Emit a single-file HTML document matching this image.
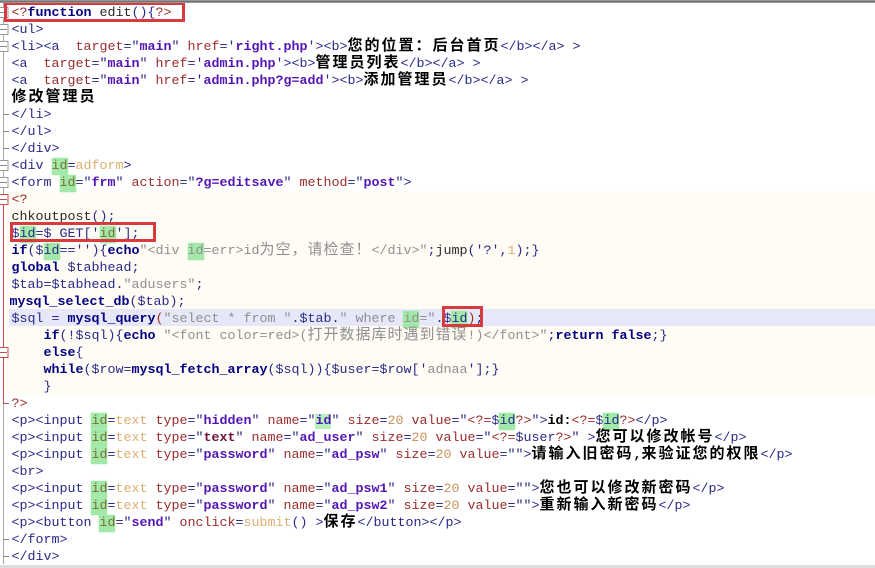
<!DOCTYPE html>
<html><head><meta charset="utf-8">
<style>
html,body{margin:0;padding:0;background:#fff}
#w{position:relative;width:875px;height:568px;overflow:hidden;background:#fff}
#php{position:absolute;left:3px;top:191px;width:872px;height:204px;background:#fffcf5}
#cur{position:absolute;left:9px;top:309px;width:866px;height:17px;background:#e6e8f9}
#code{position:absolute;left:11.5px;top:5px;right:0;font:13.334px/17px "Liberation Mono",monospace;color:#2a2a88;filter:blur(.3px)}
.l{height:17px;white-space:pre}
.a{color:#9a2c2c}
.s{color:#5316b5;font-weight:bold}
.q{color:#2a2a88}
.v{color:#dcae70}
.i{padding:1px 0;background:#a2e9a9;box-shadow:0 0 2px #b4f0ba;color:#7a7030}
.n{color:#2a2a88}
.k{color:#000080;font-weight:bold}
.g{color:#8f8f8f}
.d{color:#2a2a2a}
.c{font:bold 15px/0 "Noto Sans CJK SC","WenQuanYi Zen Hei",sans-serif;letter-spacing:2px;color:#000}
.h{font:15px/0 "Noto Sans CJK SC","WenQuanYi Zen Hei",sans-serif;letter-spacing:1px;color:#8f8f8f}
.r{position:absolute;border:3px solid #d93a3d;box-sizing:border-box}
#top{position:absolute;left:0;top:0;width:875px;height:3px;background:linear-gradient(#aaa,#666 60%,#bbb)}
#bot{position:absolute;left:0;top:565px;width:875px;height:3px;background:#ddd}
svg{position:absolute;left:0;top:0}
</style></head>
<body><div id="w">
<div id="php"></div><div id="cur"></div>
<svg width="20" height="568" fill="none" stroke-width="1">
<path d="M3.5 3V199" stroke="#aaa"/><path d="M3.5 199V403" stroke="#c05050"/><path d="M3.5 403V564" stroke="#aaa"/>
<g stroke="#999" fill="#fff">
<rect x="-2" y="7.5" width="10" height="10"/><rect x="-2" y="24.5" width="10" height="10"/><rect x="-2" y="41.5" width="10" height="10"/>
<rect x="-2" y="160.5" width="10" height="10"/><rect x="-2" y="177.5" width="10" height="10"/>
</g>
<g stroke="#c05050" fill="#fff"><rect x="-2" y="194.5" width="10" height="10"/><rect x="-2" y="347.5" width="10" height="10"/></g>
<path d="M-2 12.5H7M-2 29.5H7M-2 46.5H7M-2 165.5H7M-2 182.5H7M3 114.5H9M3 131.5H9M3 148.5H9M3 539.5H9M3 556.5H9" stroke="#888"/>
<path d="M-2 199.5H7M-2 352.5H7M3 403.5H9" stroke="#c05050"/>
</svg>
<div id="code">
<div class="l"><span class="a">&lt;?</span><span class="k">function</span> <span class="d">edit</span>(){<span class="a">?&gt;</span></div>
<div class="l">&lt;ul&gt;</div>
<div class="l">&lt;li&gt;&lt;a  <span class="a">target</span>=<span class="q">"</span><span class="s">main</span><span class="q">"</span> <span class="a">href</span>='<span class="s">right.php</span>'&gt;&lt;b&gt;<span class="c">您的位置：后台首页</span>&lt;/b&gt;&lt;/a&gt; &gt;</div>
<div class="l">&lt;a  <span class="a">target</span>=<span class="q">"</span><span class="s">main</span><span class="q">"</span> <span class="a">href</span>='<span class="s">admin.php</span>'&gt;&lt;b&gt;<span class="c">管理员列表</span>&lt;/b&gt;&lt;/a&gt; &gt;</div>
<div class="l">&lt;a  <span class="a">target</span>=<span class="q">"</span><span class="s">main</span><span class="q">"</span> <span class="a">href</span>='<span class="s">admin.php?g=add</span>'&gt;&lt;b&gt;<span class="c">添加管理员</span>&lt;/b&gt;&lt;/a&gt; &gt;</div>
<div class="l"><span class="c">修改管理员</span></div>
<div class="l">&lt;/li&gt;</div>
<div class="l">&lt;/ul&gt;</div>
<div class="l">&lt;/div&gt;</div>
<div class="l">&lt;div <span class="i">id</span>=<span class="v">adform</span>&gt;</div>
<div class="l">&lt;form <span class="i">id</span>=<span class="q">"</span><span class="s">frm</span><span class="q">"</span> <span class="a">action</span>=<span class="q">"</span><span class="s">?g=editsave</span><span class="q">"</span> <span class="a">method</span>=<span class="q">"</span><span class="s">post</span><span class="q">"</span>&gt;</div>
<div class="l"><span class="a">&lt;?</span></div>
<div class="l"><span class="d">chkoutpost</span>();</div>
<div class="l">$<span class="i n">id</span>=$ GET['<span class="i">id</span>'];</div>
<div class="l"><span class="k">if</span>($<span class="i n">id</span>==''){<span class="k">echo</span><span class="g">"&lt;div </span><span class="i g">id</span><span class="g">=err&gt;id</span><span class="h">为空，请检查！</span><span class="g">&lt;/div&gt;"</span>;<span class="d">jump</span>('?',<span class="v">1</span>);}</div>
<div class="l"><span class="k">global</span> $tabhead;</div>
<div class="l">$tab=$tabhead.<span class="g">"adusers"</span>;</div>
<div class="l" style="margin-left:-2px"><span class="k">mysql_select_db</span>($tab);</div>
<div class="l">$sql = <span class="k">mysql_query</span><span style="color:#a03020">(</span><span class="g">"select * from "</span>.$tab.<span class="g">" where </span><span class="i g">id</span><span class="g">="</span>.$<span class="i n">id</span><span style="color:#a03020">)</span>;</div>
<div class="l">    <span class="k">if</span>(!$sql){<span class="k">echo</span> <span class="g">"&lt;font color=red&gt;(</span><span class="h">打开数据库时遇到错误</span><span class="g">!)&lt;/font&gt;"</span>;<span class="k">return false</span>;}</div>
<div class="l">    <span class="k">else</span>{</div>
<div class="l">    <span class="k">while</span>($row=<span class="k">mysql_fetch_array</span>($sql)){$user=$row['<span class="g">adnaa</span>'];}</div>
<div class="l">    }</div>
<div class="l"><span class="a">?&gt;</span></div>
<div class="l">&lt;p&gt;&lt;input <span class="i">id</span>=<span class="v">text</span> <span class="a">type</span>=<span class="q">"</span><span class="s">hidden</span><span class="q">"</span> <span class="a">name</span>=<span class="q">"</span><span class="s" style="background:#b5efb9">id</span><span class="q">"</span> <span class="a">size</span>=<span class="v" style="color:#c8905a">20</span> <span class="a">value</span>=<span class="q">"</span><span class="a">&lt;?=</span>$<span class="i n">id</span><span class="a">?&gt;</span><span class="q">"</span>&gt;<span class="k" style="color:#000">id:</span><span class="a">&lt;?=</span>$<span class="i n">id</span><span class="a">?&gt;</span>&lt;/p&gt;</div>
<div class="l">&lt;p&gt;&lt;input <span class="i">id</span>=<span class="v">text</span> <span class="a">type</span>=<span class="q">"</span><span class="s" style="color:#701040">text</span><span class="q">"</span> <span class="a">name</span>=<span class="q">"</span><span class="s">ad_user</span><span class="q">"</span> <span class="a">size</span>=<span class="v" style="color:#c8905a">20</span> <span class="a">value</span>=<span class="q">"</span><span class="a">&lt;?=</span>$user<span class="a">?&gt;</span><span class="q">"</span> &gt;<span class="c">您可以修改帐号</span>&lt;/p&gt;</div>
<div class="l">&lt;p&gt;&lt;input <span class="i">id</span>=<span class="v">text</span> <span class="a">type</span>=<span class="q">"</span><span class="s">password</span><span class="q">"</span> <span class="a">name</span>=<span class="q">"</span><span class="s">ad_psw</span><span class="q">"</span> <span class="a">size</span>=<span class="v" style="color:#c8905a">20</span> <span class="a">value</span>=<span class="q">""</span>&gt;<span class="c">请输入旧密码</span><span class="k" style="color:#000">,</span><span class="c">来验证您的权限</span>&lt;/p&gt;</div>
<div class="l">&lt;br&gt;</div>
<div class="l">&lt;p&gt;&lt;input <span class="i">id</span>=<span class="v">text</span> <span class="a">type</span>=<span class="q">"</span><span class="s">password</span><span class="q">"</span> <span class="a">name</span>=<span class="q">"</span><span class="s">ad_psw1</span><span class="q">"</span> <span class="a">size</span>=<span class="v" style="color:#c8905a">20</span> <span class="a">value</span>=<span class="q">""</span>&gt;<span class="c">您也可以修改新密码</span>&lt;/p&gt;</div>
<div class="l">&lt;p&gt;&lt;input <span class="i">id</span>=<span class="v">text</span> <span class="a">type</span>=<span class="q">"</span><span class="s">password</span><span class="q">"</span> <span class="a">name</span>=<span class="q">"</span><span class="s">ad_psw2</span><span class="q">"</span> <span class="a">size</span>=<span class="v" style="color:#c8905a">20</span> <span class="a">value</span>=<span class="q">""</span>&gt;<span class="c">重新输入新密码</span>&lt;/p&gt;</div>
<div class="l">&lt;p&gt;&lt;button <span class="i">id</span>=<span class="q">"</span><span class="s">send</span><span class="q">"</span> <span class="a">onclick</span>=<span class="v">submit</span>() &gt;<span class="c">保存</span>&lt;/button&gt;&lt;/p&gt;</div>
<div class="l">&lt;/form&gt;</div>
<div class="l">&lt;/div&gt;</div>
</div>
<div class="r" style="left:4px;top:2px;width:181px;height:20px"></div>
<div class="r" style="left:10px;top:222px;width:146px;height:20px"></div>
<div class="r" style="left:442px;top:306px;width:41px;height:21px"></div>
<div id="top"></div><div id="bot"></div>
</div></body></html>
